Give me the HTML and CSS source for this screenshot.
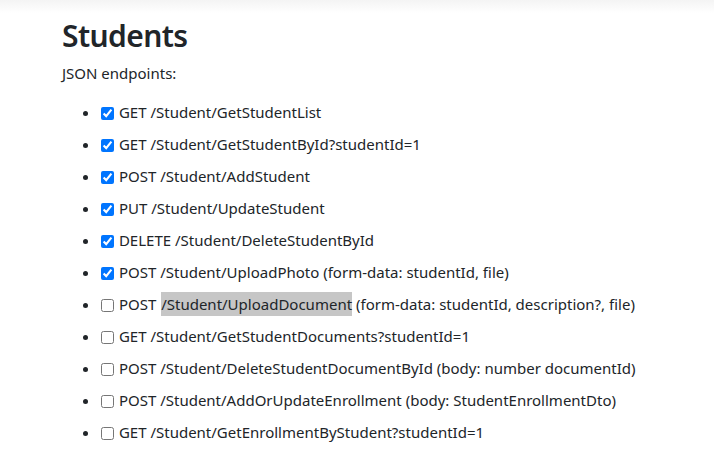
FILE: index.html
```html
<!DOCTYPE html>
<html>
<head>
<meta charset="utf-8">
<link rel="stylesheet" href="styles.css">
</head>
<body>
<div class="topshade"></div>
<main class="page">
  <h1 class="title">Students</h1>
  <p class="lead">JSON endpoints:</p>
  <ul class="endpoints">
    <li><input type="checkbox" checked> GET /Student/GetStudentList</li>
    <li><input type="checkbox" checked> GET /Student/GetStudentById?studentId=1</li>
    <li><input type="checkbox" checked> POST /Student/AddStudent</li>
    <li><input type="checkbox" checked> PUT /Student/UpdateStudent</li>
    <li><input type="checkbox" checked> DELETE /Student/DeleteStudentById</li>
    <li><input type="checkbox" checked> POST /Student/UploadPhoto (form-data: studentId, file)</li>
    <li><input type="checkbox"> POST <span class="hl">/Student/UploadDocument</span> (form-data: studentId, description?, file)</li>
    <li><input type="checkbox"> GET /Student/GetStudentDocuments?studentId=1</li>
    <li><input type="checkbox"> POST /Student/DeleteStudentDocumentById (body: number documentId)</li>
    <li><input type="checkbox"> POST /Student/AddOrUpdateEnrollment (body: StudentEnrollmentDto)</li>
    <li><input type="checkbox"> GET /Student/GetEnrollmentByStudent?studentId=1</li>
  </ul>
</main>
</body>
</html>
```
FILE: styles.css
```css
html, body {
  margin: 0;
  padding: 0;
  background: #fff;
}
body {
  font-family: "Noto Sans", "Open Sans", sans-serif;
  font-size: 15px;
  color: #212529;
}
.topshade {
  height: 13px;
  background: linear-gradient(#f4f4f4, #ffffff);
}
.page {
  padding-left: 62px;
}
.title {
  font-size: 30px;
  font-weight: 600;
  letter-spacing: -0.6px;
  line-height: 37px;
  margin: 4px 0 8px 0;
}
.lead {
  margin: 0 0 12px 0;
  line-height: 22px;
}
.endpoints {
  margin: 0;
  padding-left: 38px;
}
.endpoints li {
  line-height: 22px;
  padding: 5px 0;
}
.endpoints input {
  margin: 0 1px 0 1px;
  vertical-align: -2px;
}
.hl {
  background: #c6c6c6;
  padding: 2px 0;
  margin-left: 1px;
}
```
